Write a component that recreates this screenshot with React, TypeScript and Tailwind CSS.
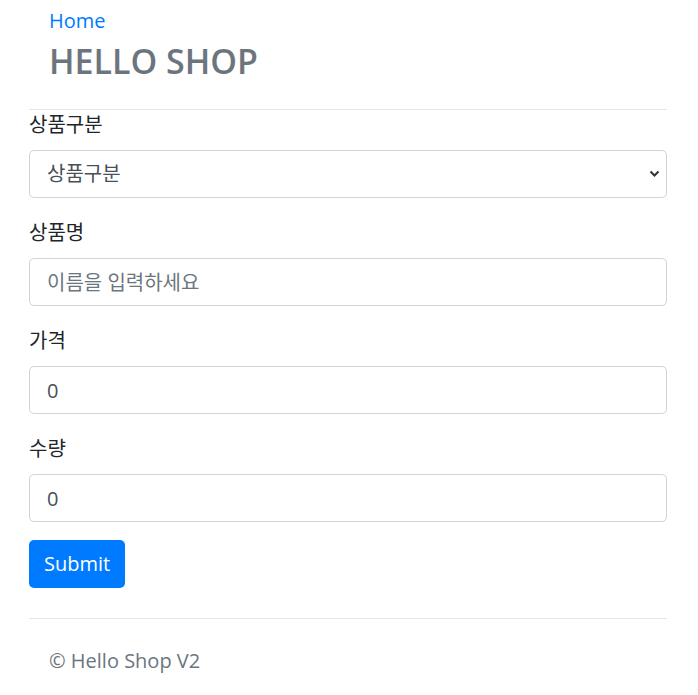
import React from "react";

const font = { fontFamily: '"Open Sans", "Noto Sans CJK KR", sans-serif' };

function Field({ label, children }: { label: string; children: React.ReactNode }) {
  return (
    <div className="mb-[20px]">
      <label className="block text-[20px] leading-[30px] mb-[10px] text-[#212529]">{label}</label>
      {children}
    </div>
  );
}

export default function App() {
  const inputCls =
    "block w-full h-[48px] px-[17px] text-[20px] text-[#495057] bg-white border border-[#ced4da] rounded-[5px] outline-none placeholder:text-[#6c757d]";
  return (
    <div className="bg-white min-h-[695px] px-[29px] pr-[31px]" style={font}>
      <div className="px-[20px] pt-[6px]">
        <a className="block text-[20px] leading-[30px] text-[#007bff]">Home</a>
        <h1 className="text-[34px] leading-[48px] font-semibold text-[#6c757d] mt-[1px] mb-[24px]">HELLO SHOP</h1>
      </div>
      <div className="border-t border-[#e5e5e5]" />
      <form>
        <Field label="상품구분">
          <div className="relative">
            <select className={inputCls + " appearance-none"} defaultValue="">
              <option value="">상품구분</option>
            </select>
            <svg className="absolute right-[7px] top-[20px]" width="11" height="8" viewBox="0 0 11 8">
              <path d="M1.5 1.5 L5.5 5.5 L9.5 1.5" fill="none" stroke="#333" strokeWidth="2" />
            </svg>
          </div>
        </Field>
        <Field label="상품명">
          <input className={inputCls} placeholder="이름을 입력하세요" />
        </Field>
        <Field label="가격">
          <input className={inputCls} defaultValue="0" />
        </Field>
        <Field label="수량">
          <input className={inputCls} defaultValue="0" />
        </Field>
        <button
          type="button"
          className="h-[48px] px-[15px] text-[20px] text-white bg-[#007bff] rounded-[5px] -mt-[2px]"
        >
          Submit
        </button>
      </form>
      <div className="border-t border-[#e5e5e5] mt-[30px]" />
      <footer className="px-[20px] pt-[27px] text-[20px] leading-[30px] text-[#6c757d]">© Hello Shop V2</footer>
    </div>
  );
}
